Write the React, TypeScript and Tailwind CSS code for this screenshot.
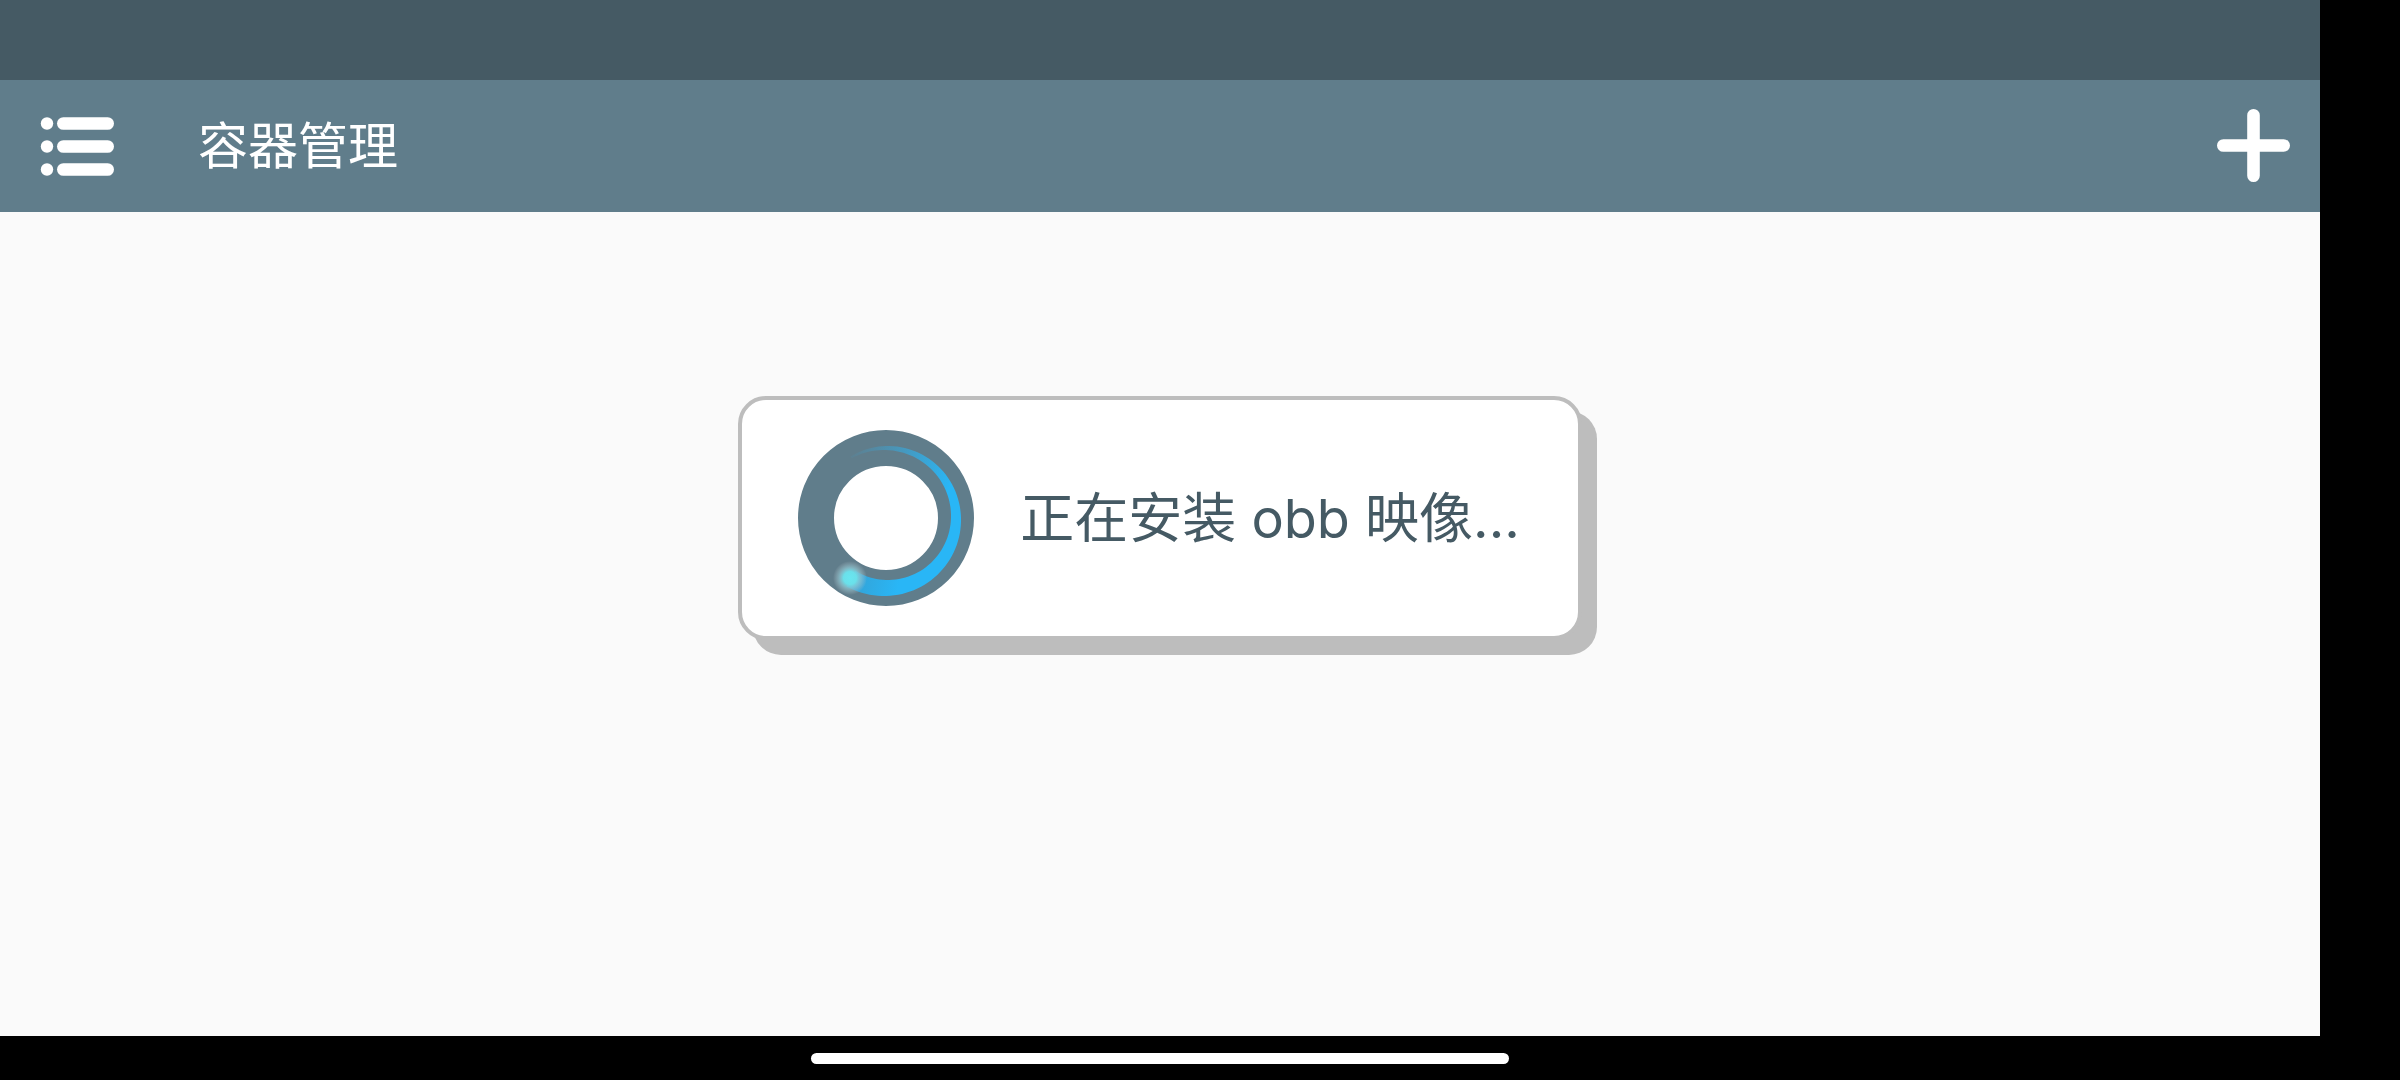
// Comet tail of the spinner: a crescent that widens clockwise between two angles
function tailPath(from: number, to: number) {
  const outer: string[] = [];
  const inner: string[] = [];
  for (let angle = from; angle <= to; angle += 3) {
    const half = 5 + angle / 30;
    const rad = (angle * Math.PI) / 180;
    const point = (r: number) =>
      `${(88 + r * Math.cos(rad)).toFixed(2)} ${(88 + r * Math.sin(rad)).toFixed(2)}`;
    outer.push(point(70 + half));
    inner.unshift(point(70 - half));
  }
  return `M${[...outer, ...inner].join("L")}Z`;
}

function Spinner() {
  return (
    <svg className="size-44 shrink-0" viewBox="0 0 176 176" fill="none" aria-hidden="true">
      <defs>
        <linearGradient id="fadeIn" gradientUnits="userSpaceOnUse" x1="48" y1="25" x2="150" y2="62">
          <stop offset="0" stopColor="#29b6f6" stopOpacity="0" />
          <stop offset="1" stopColor="#29b6f6" />
        </linearGradient>
        <linearGradient id="fadeOut" gradientUnits="userSpaceOnUse" x1="100" y1="158" x2="50" y2="148">
          <stop offset="0" stopColor="#29b6f6" />
          <stop offset="1" stopColor="#35a0d2" />
        </linearGradient>
        <radialGradient id="glow">
          <stop offset="0" stopColor="#69e6f0" />
          <stop offset="0.38" stopColor="#6ae0ea" />
          <stop offset="0.6" stopColor="#8cc8d4" stopOpacity="0.75" />
          <stop offset="1" stopColor="#b0bec5" stopOpacity="0" />
        </radialGradient>
      </defs>
      <circle cx="88" cy="88" r="70" stroke="#607d8b" strokeWidth="36" />
      <path d={tailPath(-120, 0)} fill="url(#fadeIn)" />
      <path d={tailPath(0, 120)} fill="url(#fadeOut)" />
      <circle cx="52" cy="148" r="17" fill="url(#glow)" />
    </svg>
  );
}

function Toolbar() {
  return (
    <header className="flex h-33 items-center bg-[#607d8b] pr-[30px] pb-0.5 pl-10 text-white">
      <button type="button" aria-label="菜单" className="shrink-0">
        <svg className="block size-[74px]" viewBox="0 0 74 74" fill="currentColor">
          <circle cx="7" cy="15.5" r="6.2" />
          <circle cx="7" cy="38.5" r="6.2" />
          <circle cx="7" cy="61.5" r="6.2" />
          <rect x="17" y="9.2" width="57" height="12.6" rx="6.3" />
          <rect x="17" y="32.2" width="57" height="12.6" rx="6.3" />
          <rect x="17" y="55.2" width="57" height="12.6" rx="6.3" />
        </svg>
      </button>
      <h1 className="ml-21 pt-0.5 text-[50px] leading-16">容器管理</h1>
      <button type="button" aria-label="添加" className="ml-auto shrink-0">
        <svg
          className="block size-[73px]"
          viewBox="0 0 73 73"
          fill="none"
          stroke="currentColor"
          strokeWidth="12.6"
          strokeLinecap="round"
        >
          <path d="M6.3 36.5H66.7M36.5 6.3V66.7" />
        </svg>
      </button>
    </header>
  );
}

function InstallDialog() {
  return (
    <div
      role="dialog"
      aria-label="正在安装"
      className="flex items-center gap-[46px] rounded-[28px] border-4 border-[#bdbdbd] bg-white py-[30px] pr-[58px] pl-14 shadow-[15px_15px_0_0_#bdbdbd]"
    >
      <Spinner />
      <p className="pt-0.5 text-[54px] leading-16 whitespace-nowrap text-[#455a64]">正在安装 obb 映像...</p>
    </div>
  );
}

export default function App() {
  return (
    <div className="flex min-h-screen flex-col bg-black pr-20 font-[Inter,'Noto_Sans_CJK_SC',sans-serif]">
      <div className="relative flex grow flex-col">
        <div className="h-20 bg-[#455a64]" />
        <Toolbar />
        <main className="grow bg-[#fafafa]" />
        <div className="absolute inset-0 flex items-center justify-center">
          <InstallDialog />
        </div>
      </div>
      <div className="flex h-11 justify-center pt-[17px]">
        <div className="h-[11px] w-[698px] max-w-full rounded-full bg-white" />
      </div>
    </div>
  );
}
